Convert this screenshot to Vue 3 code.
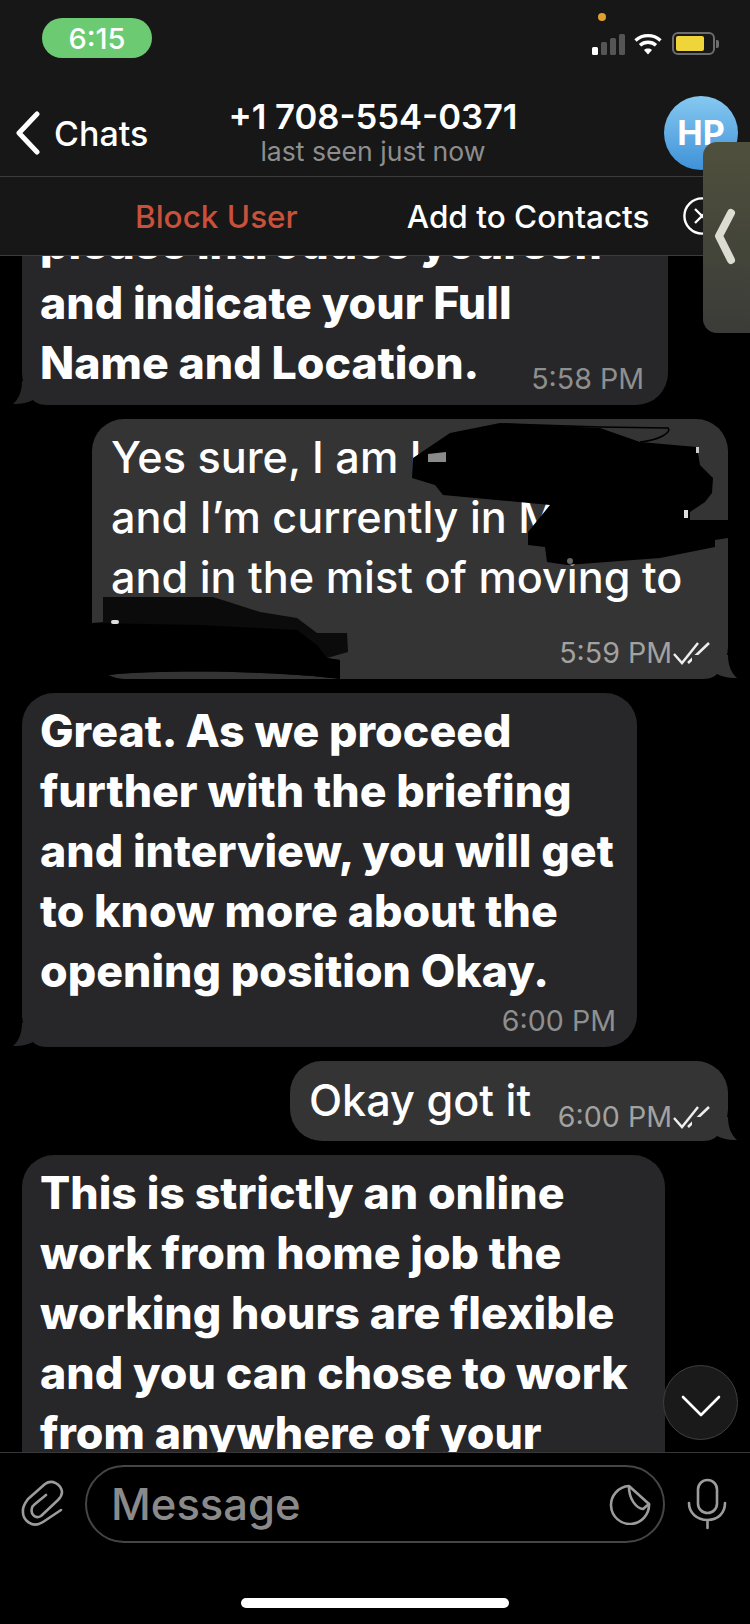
<script setup>
const signalBars = [
  { h: 8, on: true },
  { h: 13, on: false },
  { h: 17, on: false },
  { h: 21, on: false },
]
</script>

<template>
  <div class="phone">
    <header class="top">
      <div class="status">
        <div class="pill">6:15</div>
        <div class="status-right">
          <span class="dot"></span>
          <div class="status-icons">
            <div class="signal">
              <span
                v-for="(b, i) in signalBars"
                :key="i"
                class="bar"
                :class="{ on: b.on }"
                :style="{ height: b.h + 'px' }"
              ></span>
            </div>
            <svg class="wifi" width="28" height="22" viewBox="0 0 28 22" fill="none" stroke="#fff" stroke-width="3.4">
              <path d="M1.5 7.5C8.5 1 19.5 1 26.5 7.5" />
              <path d="M6 12.2C10.5 8.2 17.5 8.2 22 12.2" />
              <path d="M14 21.5l-4-4.6c2.3-1.9 5.7-1.9 8 0z" fill="#fff" stroke="none" />
            </svg>
            <div class="battery"><span class="level"></span></div>
            <span class="nub"></span>
          </div>
        </div>
      </div>

      <nav class="nav">
        <div class="back">
          <svg width="26" height="44" viewBox="0 0 26 44" fill="none" stroke="#fff" stroke-width="5" stroke-linecap="round" stroke-linejoin="round">
            <path d="M22 3L4 22l18 19" />
          </svg>
          <span class="back-label">Chats</span>
        </div>
        <div class="title">
          <div class="name">+1 708-554-0371</div>
          <div class="seen">last seen just now</div>
        </div>
        <div class="avatar">HP</div>
      </nav>

      <div class="actions">
        <span class="block">Block User</span>
        <span class="add">Add to Contacts</span>
        <svg class="close" width="38" height="38" viewBox="0 0 38 38" fill="none" stroke="#fff" stroke-width="2.4">
          <circle cx="19" cy="19" r="17.6" />
          <path d="M12 12l14 14M26 12L12 26" />
        </svg>
      </div>
    </header>

    <main class="messages">
      <div class="bubble in b1 inline">
        <div class="text strong">please introduce yourself<br />and indicate your Full<br />Name and Location.</div>
        <div class="meta">5:58 PM</div>
        <svg class="tail tail-in" width="45" height="24" viewBox="0 0 45 24"><path d="M9 0C9 11 5 19 0 23C7 23.5 14 22 20 19C22 21 26 24 34 24L45 24L45 0Z" /></svg>
      </div>

      <div class="bubble out b2">
        <div class="text">Yes sure, I am L<br />and I’m currently in M<br />and in the mist of moving to</div>
        <div class="meta-row spaced">
          <span class="meta">5:59 PM</span>
          <svg class="ticks" width="38" height="24" viewBox="0 0 38 24" fill="none" stroke="#eee" stroke-width="2.5"><path d="M1 13l8 9L25 2M15 22L36 2" /></svg>
        </div>
        <svg class="redact" width="636" height="260" viewBox="92 419 636 260">
          <path fill="#000" d="M413 458L450 433L500 423L600 428L640 442L697 447L700 465L713 478L712 493L705 502L690 512L690 520L728 520L728 538L715 540L715 547L660 558L567 565L547 562L545 547L528 545L528 532L550 505L443 495L435 485L412 478Z" />
          <path fill="none" stroke="#000" stroke-width="1.6" d="M490 432L505 424L600 427L668 428C672 432 660 440 640 442" />
          <path fill="#8a8a8a" d="M428 454L446 452L446 462L428 462Z" />
          <circle cx="570" cy="561" r="3" fill="#666" />
          <rect x="696" y="447" width="3" height="6" fill="#ccc" />
          <rect x="684" y="510" width="4" height="8" fill="#ddd" />
          <path fill="#0b0b0b" d="M103 597L213 597L260 612L297 618L317 633L347 633L348 652L327 658L340 660L340 679C300 673 180 668 108 675L92 665L92 623L103 622Z" />
          <path fill="#000" d="M92 623L200 625L297 630L317 645L327 658L340 660L340 679C300 673 180 668 108 675L92 665Z" />
          <rect x="111" y="620" width="8" height="4" rx="2" fill="#ddd" />
        </svg>
        <svg class="tail tail-out" width="45" height="24" viewBox="0 0 45 24"><path d="M36 0C36 11 40 19 45 23C38 23.5 31 22 25 19C23 21 19 24 11 24L0 24L0 0Z" /></svg>
      </div>

      <div class="bubble in b3">
        <div class="text strong">Great. As we proceed<br />further with the briefing<br />and interview, you will get<br />to know more about the<br />opening position Okay.</div>
        <div class="meta-row spaced-small"><span class="meta">6:00 PM</span></div>
        <svg class="tail tail-in" width="45" height="24" viewBox="0 0 45 24"><path d="M9 0C9 11 5 19 0 23C7 23.5 14 22 20 19C22 21 26 24 34 24L45 24L45 0Z" /></svg>
      </div>

      <div class="bubble out b4 inline">
        <div class="text">Okay got it</div>
        <div class="meta-row">
          <span class="meta">6:00 PM</span>
          <svg class="ticks" width="38" height="24" viewBox="0 0 38 24" fill="none" stroke="#eee" stroke-width="2.5"><path d="M1 13l8 9L25 2M15 22L36 2" /></svg>
        </div>
        <svg class="tail tail-out" width="45" height="24" viewBox="0 0 45 24"><path d="M36 0C36 11 40 19 45 23C38 23.5 31 22 25 19C23 21 19 24 11 24L0 24L0 0Z" /></svg>
      </div>

      <div class="bubble in b5">
        <div class="text strong">This is strictly an online<br />work from home job the<br />working hours are flexible<br />and you can chose to work<br />from anywhere of your</div>
      </div>

      <button class="down" aria-label="Scroll down">
        <svg width="40" height="22" viewBox="0 0 40 22" fill="none" stroke="#fff" stroke-width="2.6" stroke-linecap="round" stroke-linejoin="round">
          <path d="M2 2l18 18L38 2" />
        </svg>
      </button>
    </main>

    <footer class="composer">
      <div class="input-row">
        <svg class="attach" width="44" height="50" viewBox="20 19 44 50" fill="none" stroke="#9c9c9c" stroke-width="2.6" stroke-linecap="round" stroke-linejoin="round">
          <path d="M61 50L43 62C32 69 22 60 23 50C23 46 25 43 28 39L45 24C52 19 61 24 62 32C62 35 60 38 58 40L41 56C36 59 30 55 32 48C32 46 34 45 35 44L46 35" />
        </svg>
        <div class="field">
          <span class="placeholder">Message</span>
          <svg width="44" height="42" viewBox="8 22 44 42" fill="none" stroke="#9c9c9c" stroke-width="2.6" stroke-linejoin="round" stroke-linecap="round">
            <path d="M29 25A19 19 0 1 0 49 43Z" />
            <path d="M29 26C29 38 36 47 43 48L49 43" />
          </svg>
        </div>
        <svg class="mic" width="42" height="52" viewBox="86 19 42 52" fill="none" stroke="#9c9c9c" stroke-width="2.6" stroke-linecap="round">
          <rect x="98" y="21" width="19" height="33" rx="9.5" />
          <path d="M89 44C89 54 97 61 107.5 61C118 61 125 54 125 44M107.5 61V69" />
        </svg>
      </div>
      <div class="home"></div>
    </footer>

    <aside class="side-panel">
      <svg width="24" height="60" viewBox="0 0 24 60" fill="none" stroke="#dcdcd2" stroke-width="8" stroke-linecap="round" stroke-linejoin="round">
        <path d="M18 5L6 28l12 24" />
      </svg>
    </aside>
  </div>
</template>

<style scoped>
.phone {
  position: relative;
  width: 750px;
  height: 1624px;
  display: flex;
  flex-direction: column;
  overflow: hidden;
  background: #000;
  color: #fff;
  font-family: Inter, "Liberation Sans", sans-serif;
}
.top {
  flex: none;
  background: #171717;
}
.status {
  height: 86px;
  box-sizing: border-box;
  padding: 13px 31px 0 42px;
  display: flex;
  justify-content: space-between;
  align-items: flex-start;
}
.pill {
  margin-top: 5px;
  width: 110px;
  height: 40px;
  border-radius: 20px;
  background: #6ccb72;
  text-align: center;
  line-height: 41px;
  font-size: 29px;
  font-weight: 500;
}
.status-right {
  display: flex;
  flex-direction: column;
}
.dot {
  width: 8px;
  height: 8px;
  margin-left: 6px;
  border-radius: 50%;
  background: #e0a030;
}
.status-icons {
  margin-top: 11px;
  display: flex;
  align-items: center;
  gap: 0;
  height: 23px;
}
.signal {
  display: flex;
  align-items: flex-end;
  gap: 3px;
  height: 22px;
}
.bar {
  width: 6px;
  border-radius: 1.5px;
  background: #555;
}
.bar.on {
  background: #fff;
}
.wifi {
  margin-left: 9px;
}
.battery {
  margin-left: 10px;
  width: 43px;
  height: 23px;
  box-sizing: border-box;
  border: 2px solid #6d6d6d;
  border-radius: 6px;
  padding: 2px;
}
.level {
  display: block;
  width: 28px;
  height: 15px;
  border-radius: 2px;
  background: #f0d53a;
}
.nub {
  margin-left: 1px;
  width: 3px;
  height: 8px;
  border-radius: 0 2px 2px 0;
  background: #6d6d6d;
}
.nav {
  height: 91px;
  box-sizing: border-box;
  padding: 10px 12px 0;
  display: grid;
  grid-template-columns: 1fr auto 1fr;
  align-items: start;
  border-bottom: 1px solid #3c3c3c;
}
.back {
  height: 74px;
  padding-left: 3px;
  display: flex;
  align-items: center;
  gap: 13px;
}
.back-label {
  font-size: 34px;
  font-weight: 500;
}
.title {
  margin-top: 2px;
  padding-right: 4px;
  text-align: center;
}
.name {
  font-size: 34.6px;
  line-height: 36px;
  font-weight: 600;
}
.seen {
  margin-top: 1px;
  font-size: 26.6px;
  line-height: 32px;
  color: #8e8e8e;
}
.avatar {
  justify-self: end;
  width: 74px;
  height: 74px;
  border-radius: 50%;
  background: linear-gradient(#86c9f1, #3f92d8);
  text-align: center;
  line-height: 74px;
  font-size: 34px;
  font-weight: 700;
}
.actions {
  height: 79px;
  box-sizing: border-box;
  padding-left: 135px;
  display: flex;
  align-items: center;
  font-size: 31.5px;
  font-weight: 500;
  border-bottom: 1px solid #3c3c3c;
}
.block {
  color: #c9503a;
  margin-right: 109px;
}
.close {
  margin-left: 33px;
}
.messages {
  position: relative;
  flex: 1;
  min-height: 0;
  display: flex;
  flex-direction: column;
  gap: 14px;
  overflow: hidden;
}
.bubble {
  position: relative;
  flex: none;
  box-sizing: border-box;
  border-radius: 32px;
  padding-left: 19px;
  padding-right: 19px;
}
.in {
  align-self: flex-start;
  margin-left: 22px;
  padding-left: 18px;
  background: #272729;
}
.out {
  align-self: flex-end;
  margin-right: 22px;
  background: #343434;
}
.inline {
  display: flex;
  justify-content: space-between;
  align-items: flex-end;
}
.text {
  font-size: 43.2px;
  line-height: 60px;
  font-weight: 500;
  white-space: nowrap;
}
.strong {
  font-size: 44.7px;
  font-weight: 800;
}
.meta {
  font-size: 28.6px;
  line-height: 30px;
  color: #8f8f8f;
  white-space: nowrap;
}
.out .meta {
  color: #a2a2a2;
}
.meta-row {
  display: flex;
  justify-content: flex-end;
  align-items: center;
}
.ticks {
  margin-left: 1px;
  margin-right: -2px;
}
.spaced {
  margin-top: 31px;
}
.spaced-small {
  margin-top: 5px;
  margin-right: 2px;
}
.b1 {
  width: 646px;
  margin-top: -50px;
  padding-top: 7px;
  padding-bottom: 12px;
  padding-right: 24px;
}
.b1 .text {
  width: 480px;
}
.b1 .meta {
  margin-bottom: -1px;
}
.b2 {
  width: 636px;
  padding-top: 8px;
  padding-bottom: 11px;
}
.b3 {
  width: 615px;
  padding-top: 8px;
  padding-bottom: 11px;
}
.b4 {
  width: 438px;
  padding-top: 9px;
  padding-bottom: 11px;
}
.b4 .meta-row {
  margin-bottom: -2px;
}
.b5 {
  width: 643px;
  padding-top: 8px;
  padding-bottom: 40px;
}
.tail {
  position: absolute;
  bottom: 0;
}
.tail-in {
  left: -9px;
  fill: #272729;
}
.tail-out {
  right: -9px;
  fill: #343434;
}
.redact {
  position: absolute;
  left: 0;
  top: 0;
}
.down {
  position: absolute;
  right: 12px;
  bottom: 12px;
  width: 75px;
  height: 75px;
  padding: 6px 0 0;
  box-sizing: border-box;
  border-radius: 50%;
  border: 1px solid #3f3f3f;
  background: #1a1a1a;
  display: flex;
  align-items: center;
  justify-content: center;
}
.composer {
  flex: none;
  height: 172px;
  box-sizing: border-box;
  border-top: 1px solid #383838;
  background: #000;
  padding-top: 12px;
  display: flex;
  flex-direction: column;
}
.input-row {
  display: flex;
  align-items: center;
  padding-left: 20px;
}
.field {
  margin-left: 21px;
  width: 580px;
  height: 78px;
  box-sizing: border-box;
  border: 2px solid #454545;
  border-radius: 39px;
  padding: 0 11px 0 24px;
  display: flex;
  align-items: center;
  justify-content: space-between;
}
.placeholder {
  font-size: 43.6px;
  font-weight: 500;
  color: #8a8a8a;
}
.mic {
  margin-left: 21px;
}
.home {
  margin: 55px auto 0;
  width: 268px;
  height: 10px;
  border-radius: 5px;
  background: #fff;
}
.side-panel {
  position: absolute;
  top: 142px;
  left: 703px;
  width: 47px;
  height: 191px;
  border-radius: 14px 0 0 14px;
  background: linear-gradient(#4f503c, #3b3c38);
  display: flex;
  align-items: center;
  padding-left: 10px;
  box-sizing: border-box;
}
</style>

<style>
html, body { margin: 0; background: #000; }
</style>
